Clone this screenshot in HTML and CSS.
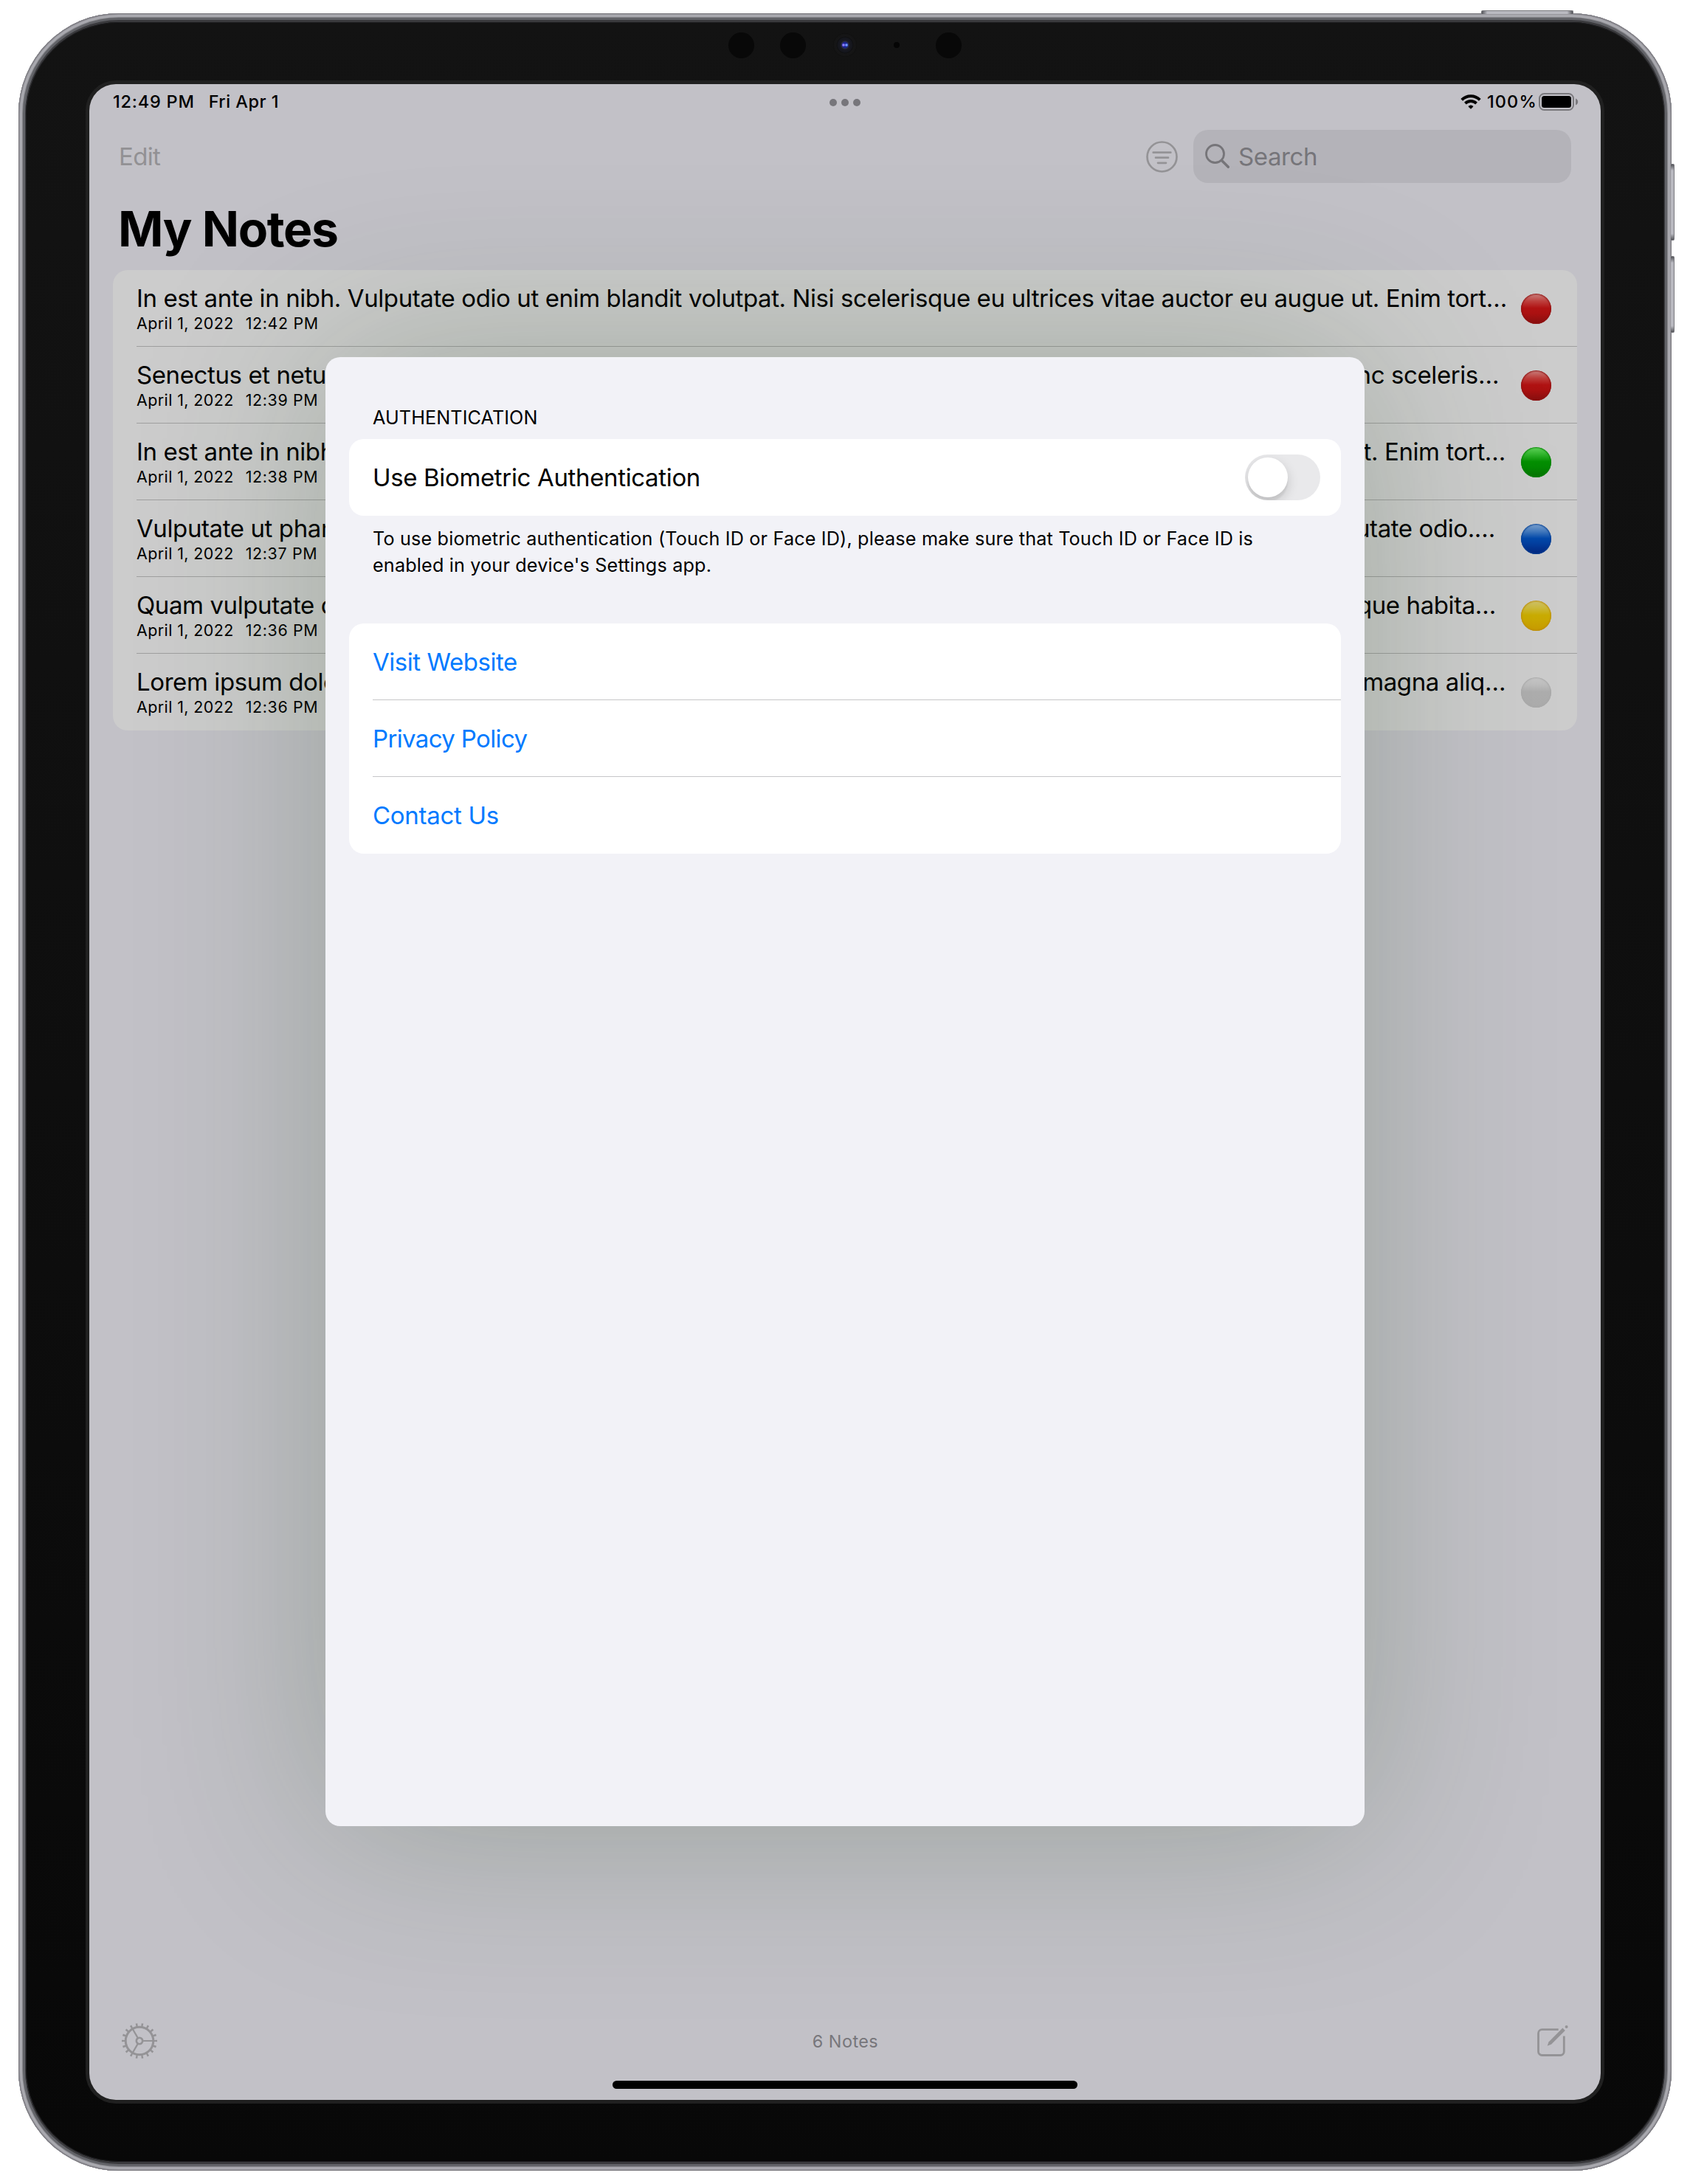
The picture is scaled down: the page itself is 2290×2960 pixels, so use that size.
FILE: index.html
```html
<!DOCTYPE html>
<html lang="en">
<head>
<meta charset="utf-8">
<title>My Notes</title>
<link rel="stylesheet" href="styles.css">
</head>
<body>
<div class="device">
  <i class="key key-power"></i>
  <i class="key key-up"></i>
  <i class="key key-down"></i>
  <div class="bezel">
    <i class="sensor s1"></i>
    <i class="sensor s2"></i>
    <i class="lens"></i>
    <i class="mic"></i>
    <i class="sensor s3"></i>
    <div class="screen">
      <header class="status">
        <div class="status-left"><span class="time">12:49 PM</span><span class="day">Fri Apr 1</span></div>
        <div class="multitask"><i></i><i></i><i></i></div>
        <div class="status-right">
          <svg class="wifi" width="28" height="20" viewBox="0 0 28 20" fill="none" stroke="#000">
            <path d="M1.7 7.4A17.3 17.3 0 0 1 26.3 7.4" stroke-width="3.9"/>
            <path d="M6.4 12.1A10.9 10.9 0 0 1 21.6 12.1" stroke-width="3.8"/>
            <path d="M14 19.3L10.9 16.3A4.6 4.6 0 0 1 17.1 16.3Z" fill="#000" stroke-width="1" stroke-linejoin="round"/>
          </svg>
          <span class="percent">100%</span>
          <svg width="54" height="24" viewBox="0 0 54 24">
            <rect x="1" y="1" width="46" height="22" rx="6.5" fill="none" stroke="#7a797d" stroke-width="2"/>
            <rect x="4" y="4" width="40" height="16" rx="3.5"/>
            <path d="M50 7.500c2 .6 3.200 2.400 3.200 4.500s-1.200 3.900-3.200 4.500z" fill="#7a797d"/>
          </svg>
        </div>
      </header>

      <nav class="nav">
        <span class="edit">Edit</span>
        <div class="nav-right">
          <svg width="43" height="43" viewBox="0 0 43 43" fill="none" stroke="#949396" stroke-width="2.700" stroke-linecap="round">
            <circle cx="21.500" cy="21.500" r="20"/>
            <path d="M9.700 15.700h23.600M13 22.700h17M16 29.800h11"/>
          </svg>
          <div class="search">
            <svg width="34" height="34" viewBox="0 0 34 34" fill="none" stroke="#767579" stroke-linecap="round">
              <circle cx="13.500" cy="13.500" r="12" stroke-width="2.800"/>
              <path d="M22.500 22.500L31.300 31.300" stroke-width="3.500"/>
            </svg>
            <span>Search</span>
          </div>
        </div>
      </nav>

      <h1>My Notes</h1>

      <ul class="notes">
        <li class="note">
          <div class="note-body">
            <div class="note-title">In est ante in nibh. Vulputate odio ut enim blandit volutpat. Nisi scelerisque eu ultrices vitae auctor eu augue ut. Enim tort…</div>
            <div class="note-date"><span>April 1, 2022</span><span>12:42 PM</span></div>
          </div>
          <i class="ball red"></i>
        </li>
        <li class="note">
          <div class="note-body">
            <div class="note-title w2"><span>Senectus et netus</span><span>nunc sceleris…</span></div>
            <div class="note-date"><span>April 1, 2022</span><span>12:39 PM</span></div>
          </div>
          <i class="ball red"></i>
        </li>
        <li class="note">
          <div class="note-body">
            <div class="note-title w3"><span>In est ante in nibh.</span><span>ut. Enim tort…</span></div>
            <div class="note-date"><span>April 1, 2022</span><span>12:38 PM</span></div>
          </div>
          <i class="ball green"></i>
        </li>
        <li class="note">
          <div class="note-body">
            <div class="note-title w4"><span>Vulputate ut phare</span><span>putate odio.…</span></div>
            <div class="note-date"><span>April 1, 2022</span><span>12:37 PM</span></div>
          </div>
          <i class="ball blue"></i>
        </li>
        <li class="note">
          <div class="note-body">
            <div class="note-title w5"><span>Quam vulputate dig</span><span>tesque habita…</span></div>
            <div class="note-date"><span>April 1, 2022</span><span>12:36 PM</span></div>
          </div>
          <i class="ball yellow"></i>
        </li>
        <li class="note">
          <div class="note-body">
            <div class="note-title w6"><span>Lorem ipsum dolor</span><span>magna aliq…</span></div>
            <div class="note-date"><span>April 1, 2022</span><span>12:36 PM</span></div>
          </div>
          <i class="ball white"></i>
        </li>
      </ul>

      <footer class="toolbar">
        <svg width="48" height="48" viewBox="-24 -24 48 48" fill="none" stroke="#949396">
          <circle r="18.800" stroke-width="3"/>
          <circle r="21.700" stroke-width="4.600" pathLength="180" stroke-dasharray="3.200 6.800" stroke-dashoffset="1.600"/>
          <circle r="4.200" stroke-width="2.600"/>
          <path d="M5 0H18M-2.500 -4.330L-9.500 -16.450M-2.500 4.330L-9.500 16.450" stroke-width="2.200"/>
        </svg>
        <span class="count">6 Notes</span>
        <svg class="compose" width="43" height="43" viewBox="0 0 43 43" fill="none" stroke="#949396">
          <path d="M28.700 5.700H6.500a5 5 0 0 0-5 5V35.500a5 5 0 0 0 5 5H31.300a5 5 0 0 0 5-5V14.500" stroke-width="2.800"/>
          <path d="M13.700 27.700L15.500 22.400L34.400 3.600L37.800 7L19 25.700Z" fill="#949396" stroke="none"/>
          <circle cx="39.600" cy="1.900" r="2" fill="#949396" stroke="none"/>
        </svg>
      </footer>
      <div class="home"></div>

      <section class="sheet">
        <h2>AUTHENTICATION</h2>
        <div class="card setting">
          <span>Use Biometric Authentication</span>
          <div class="toggle"><i></i></div>
        </div>
        <p>To use biometric authentication (Touch ID or Face ID), please make sure that Touch ID or Face ID is<br>enabled in your device's Settings app.</p>
        <div class="card links">
          <a>Visit Website</a>
          <a class="privacy">Privacy Policy</a>
          <a class="contact">Contact Us</a>
        </div>
      </section>
    </div>
  </div>
</div>
</body>
</html>
```
FILE: styles.css
```css
* { box-sizing: border-box; margin: 0; padding: 0; }

body {
  background: #fff;
  padding: 18px 25px;
  font-family: Inter, "Liberation Sans", sans-serif;
  color: #000;
}
i { display: block; }
svg { display: block; flex: none; overflow: visible; }

/* Hardware */
.device {
  position: relative;
  width: 2240px;
  height: 2924px;
  padding: 12px 10px;
  border-radius: 136px;
  background: #3a3a3d;
  box-shadow: inset 0 0 0 1px #7b7a80, inset 0 0 0 2px #97969c, inset 0 0 0 5px #a9a9af, inset 0 0 0 6px #85858a, inset 0 0 0 9px #626368;
}
.bezel {
  position: relative;
  height: 2900px;
  padding: 84px 86px;
  border-radius: 126px;
  background: linear-gradient(#131313, #0e0e0e 50%, #080808);
  box-shadow: inset 0 0 0 1px #1e1e20;
}
.key {
  position: absolute;
  background: linear-gradient(90deg, #55565b, #b9b9c0 6%, #b9b9c0 94%, #55565b);
  border: 1px solid #77777c;
}
.key-power { left: 1982px; top: -4px; width: 125px; height: 5px; border-bottom: 0; border-radius: 2px 2px 0 0; }
.key-up, .key-down {
  left: 2239px; width: 5px; height: 104px; border-left: 0; border-radius: 0 2px 2px 0;
  background: linear-gradient(#55565b, #b9b9c0 8%, #b9b9c0 92%, #55565b);
}
.key-up { top: 204px; }
.key-down { top: 329px; }

.sensor { position: absolute; top: 14px; width: 35px; height: 35px; border-radius: 50%; background: #080808; }
.s1 { left: 952px; }
.s2 { left: 1022px; }
.s3 { left: 1233px; }
.lens {
  position: absolute; left: 1094px; top: 15px; width: 32px; height: 32px; border-radius: 50%;
  background:
    radial-gradient(circle at 14px 16px, #8f7dff 0 1px, transparent 2.5px),
    radial-gradient(circle at 18px 16px, #6f9bff 0 1px, transparent 2.5px),
    radial-gradient(circle, #1a2390 0 3.5px, #2b2d3c 5px, #191a22 6px, #14151b 10px, #0f0f10 11px, #161617 12px, #141414 15px, #0e0e0e 16px);
}
.mic { position: absolute; left: 1176px; top: 27px; width: 8px; height: 8px; border-radius: 50%; background: #050505; }

.screen {
  position: relative;
  display: flex;
  flex-direction: column;
  width: 2048px;
  height: 2732px;
  border-radius: 36px;
  background: #c2c1c7;
  box-shadow: 0 0 0 5px #202020;
}

/* Status bar */
.status {
  display: grid;
  grid-template-columns: 1fr auto 1fr;
  align-items: center;
  height: 46px;
  padding: 2px 30px 0 32px;
  font-size: 23.5px;
  line-height: 28px;
  font-weight: 500;
}
.status-left { display: flex; gap: 19px; }
.time { letter-spacing: .78px; }
.day { letter-spacing: .47px; }
.multitask { display: flex; gap: 6px; padding: 2px 2px 0 0; }
.multitask i { width: 10px; height: 10px; border-radius: 50%; background: #77767b; }
.status-right { display: flex; justify-content: flex-end; align-items: center; }
.percent { width: 70px; margin-left: 8px; letter-spacing: 1.1px; }

/* Navigation bar */
.nav {
  display: flex;
  justify-content: space-between;
  align-items: center;
  height: 104px;
  padding: 0 40px;
  font-size: 33px;
  line-height: 40px;
}
.edit { color: #929194; letter-spacing: -.7px; }
.nav-right { display: flex; align-items: center; gap: 21px; }
.search {
  display: flex;
  align-items: center;
  gap: 11px;
  width: 512px;
  height: 72px;
  padding-left: 16px;
  border-radius: 20px;
  background: #b4b3b9;
  color: #76757a;
  letter-spacing: -.4px;
}

h1 {
  margin: 6px 0 16px 39px;
  font-size: 66px;
  line-height: 80px;
  font-weight: 700;
  letter-spacing: -1.3px;
}

/* Notes list */
.notes { list-style: none; margin: 0 32px; border-radius: 20px; background: #ccc; }
.note {
  position: relative;
  display: flex;
  justify-content: space-between;
  height: 104px;
  padding: 18px 35px 0 32px;
}
.note:not(:last-child) {
  background: linear-gradient(#9f9f9f, #9f9f9f) 32px 103px / 100% 1px no-repeat;
}
.note-title {
  display: flex;
  justify-content: space-between;
  height: 40px;
  font-size: 33px;
  line-height: 40px;
  letter-spacing: -.4px;
  white-space: nowrap;
}
.w2 { width: 1846px; }
.w3 { width: 1855px; }
.w4 { width: 1841px; }
.w5 { width: 1842px; }
.w6 { width: 1855px; }
.note-date {
  display: flex;
  gap: 16px;
  padding-top: 1px;
  font-size: 21.4px;
  line-height: 26px;
  letter-spacing: .43px;
}
.note-date span + span { letter-spacing: .65px; }
.ball { width: 41px; height: 41px; margin-top: 14px; border-radius: 50%; flex: none; }
.red { background: linear-gradient(#c98380, #bd3f3c 25%, #b01212 48%, #ab1111 65%, #860f0f); box-shadow: inset 0 0 2px 1px #8e1313; }
.green { background: linear-gradient(#62d35c, #2fb32b 25%, #048f02 48%, #038a02 65%, #067203); box-shadow: inset 0 0 2px 1px #0a8208; }
.blue { background: linear-gradient(#7ea3cf, #4379bd 25%, #0349aa 48%, #033f9f 65%, #03267e); box-shadow: inset 0 0 2px 1px #063f92; }
.yellow { background: linear-gradient(#cdc16e, #ccb93a 25%, #c9ac02 48%, #caa802 65%, #c79a02); box-shadow: inset 0 0 2px 1px #bd8d08; }
.white { background: linear-gradient(#c6c6c6, #bdbdbd 25%, #adadad 48%, #acacac); box-shadow: inset 0 0 2px 1px #a9a9a9; }

/* Toolbar */
.toolbar {
  display: grid;
  grid-template-columns: 1fr auto 1fr;
  align-items: center;
  height: 60px;
  margin-top: auto;
  padding: 0 43px 0 44px;
}
.count { padding-top: 2px; color: #77767b; font-size: 23.4px; line-height: 28px; letter-spacing: .45px; }
.compose { justify-self: end; margin-top: 1px; }
.home { width: 630px; height: 11px; margin: 24px auto 15px; border-radius: 6px; background: #000; }

/* Settings sheet */
.sheet {
  position: absolute;
  left: 320px;
  top: 370px;
  width: 1408px;
  height: 1991px;
  padding: 66px 32px 0;
  border-radius: 20px;
  background: #f2f2f7;
  box-shadow: 0 0 250px rgba(33, 70, 30, .26);
}
.sheet h2 {
  padding: 0 32px;
  height: 45px;
  font-size: 25.2px;
  line-height: 32px;
  font-weight: 400;
  letter-spacing: .1px;
}
.card { border-radius: 20px; background: #fff; font-size: 33px; line-height: 40px; }
.setting {
  display: flex;
  align-items: center;
  justify-content: space-between;
  height: 104px;
  padding: 0 28px 0 32px;
  letter-spacing: -.35px;
}
.toggle { width: 102px; height: 62px; padding: 4px; border-radius: 31px; background: #e9e9eb; overflow: hidden; }
.toggle i { width: 54px; height: 54px; border-radius: 50%; background: #fff; box-shadow: 0 6px 16px rgba(0, 0, 0, .16), 0 6px 2px rgba(0, 0, 0, .05); }
.sheet p {
  height: 146px;
  padding: 13px 32px 0;
  font-size: 25.2px;
  line-height: 36px;
  letter-spacing: .16px;
  white-space: nowrap;
}
.links a {
  display: flex;
  align-items: center;
  height: 104px;
  margin-left: 32px;
  color: #007aff;
  letter-spacing: -.45px;
}
.links a:not(:last-child) { border-bottom: 1px solid #c6c6c8; }
.links .privacy { letter-spacing: -.64px; }
.links .contact { letter-spacing: -.3px; }
```
